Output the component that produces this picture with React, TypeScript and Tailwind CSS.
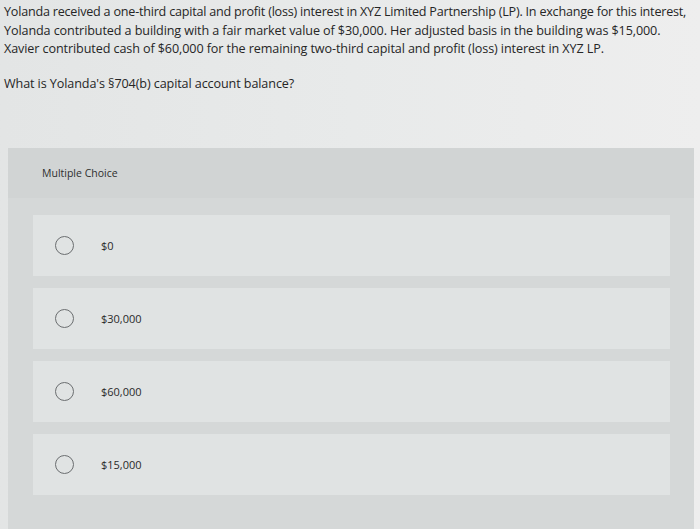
const options = ["$0", "$30,000", "$60,000", "$15,000"];

function Radio() {
  return <span className="block w-[19px] h-[19px] rounded-full border-[1.5px] border-[#6b6e70] shrink-0" />;
}

export default function App() {
  return (
    <div
      className="w-[700px] h-[529px] overflow-hidden bg-gradient-to-r from-[#e3e5e5] via-[#e8eaea] to-[#eeeeee] text-[#262626]"
      style={{ fontFamily: '"Open Sans", "Liberation Sans", sans-serif' }}
    >
      <div className="pl-[4px] pt-[3px] text-[12.6px] leading-[18.6px] tracking-[-0.1px] whitespace-nowrap">
        <p className="tracking-[-0.22px]">Yolanda received a one-third capital and profit (loss) interest in XYZ Limited Partnership (LP). In exchange for this interest,</p>
        <p>Yolanda contributed a building with a fair market value of $30,000. Her adjusted basis in the building was $15,000.</p>
        <p>Xavier contributed cash of $60,000 for the remaining two-third capital and profit (loss) interest in XYZ LP.</p>
        <p className="mt-[16px]">What is Yolanda's §704(b) capital account balance?</p>
      </div>

      <div className="ml-[8px] mr-[6px] mt-[55px] bg-[#d5d8d8] h-[400px]">
        <div className="h-[50px] bg-[#d1d4d4] pl-[34px] pt-[18px] text-[10.5px] text-[#2e2e2e]">Multiple Choice</div>
        <div className="flex flex-col gap-[12px] pl-[25px] pr-[24px] pt-[17px]">
          {options.map((o) => (
            <div key={o} className="h-[61px] bg-[#e0e3e3] flex items-center pl-[22px] gap-[27px]">
              <Radio />
              <span className="text-[11px] text-[#2a2a2a]">{o}</span>
            </div>
          ))}
        </div>
      </div>
    </div>
  );
}
